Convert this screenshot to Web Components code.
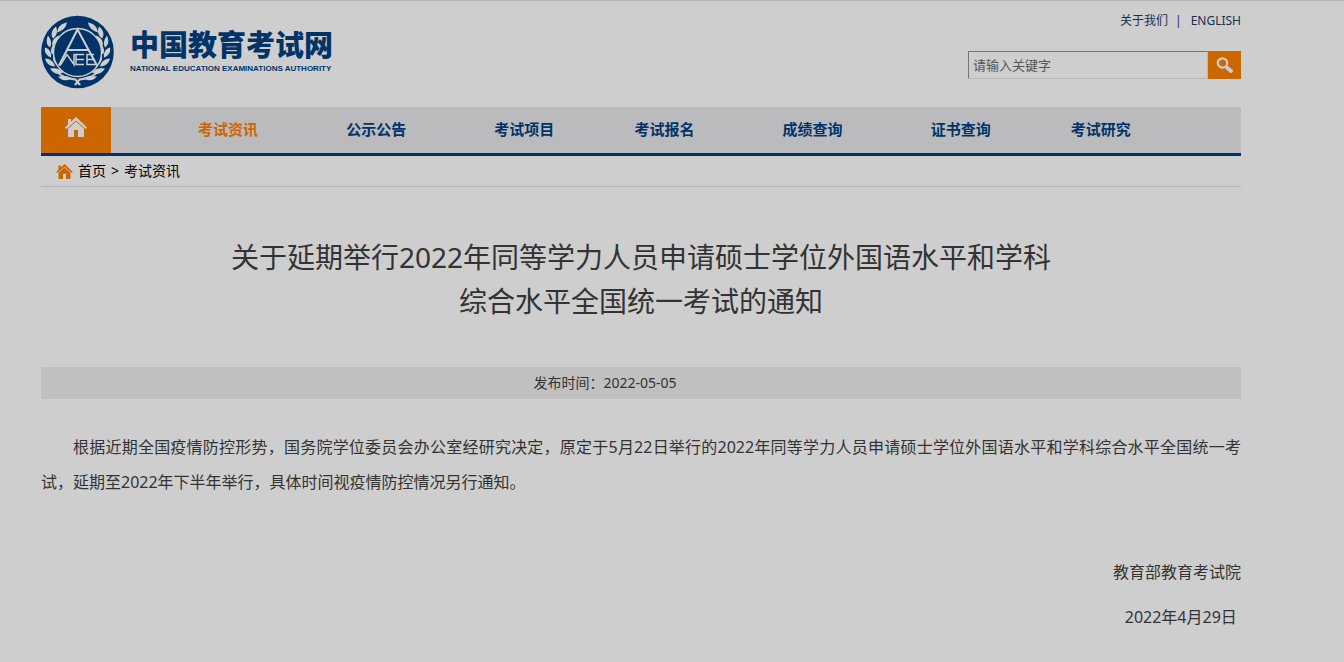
<!DOCTYPE html>
<html lang="zh-CN">
<head>
<meta charset="utf-8">
<title>中国教育考试网</title>
<style>
  html {
    --page: #cecece;
    --blue: #003468;
    --orange: #cc6600;
    --text: #333;
  }
  body {
    margin: 0;
    background: var(--page);
    color: var(--text);
    font-family: "Noto Sans", "Noto Sans CJK SC", sans-serif;
    font-size: 14px;
  }
</style>
</head>
<body>
<exam-page>
  <site-header slot="header"></site-header>
  <site-nav slot="header" current="考试资讯"
    links='["考试资讯","公示公告","考试项目","考试报名","成绩查询","证书查询","考试研究"]'></site-nav>
  <bread-crumb slot="header" page="考试资讯"></bread-crumb>
  <notice-article date="2022-05-05">
    <span slot="title">关于延期举行2022年同等学力人员申请硕士学位外国语水平和学科<br>综合水平全国统一考试的通知</span>
    <span slot="content">根据近期全国疫情防控形势，国务院学位委员会办公室经研究决定，原定于5月22日举行的2022年同等学力人员申请硕士学位外国语水平和学科综合水平全国统一考试，延期至2022年下半年举行，具体时间视疫情防控情况另行通知。</span>
    <span slot="sign">教育部教育考试院</span>
    <span slot="sign-date">2022年4月29日&nbsp;</span>
  </notice-article>
</exam-page>

<script>
class ExamPage extends HTMLElement {
  constructor() {
    super();
    this.attachShadow({ mode: "open" });
    this.shadowRoot.innerHTML = `
      <style>
        :host {
          display: block;
          border-top: 1px solid #b8b8b8;
          padding: 0 103px 0 41px;
        }
        .container {
          max-width: 1200px;
        }
      </style>
      <div class="container">
        <slot name="header"></slot>
        <main><slot></slot></main>
      </div>
    `;
  }
}

class SiteLogo extends HTMLElement {
  constructor() {
    super();
    this.attachShadow({ mode: "open" });
    this.shadowRoot.innerHTML = `
      <style>
        :host {
          display: block;
          color: var(--blue);
        }
        a {
          display: flex;
          align-items: center;
          gap: 16px;
          color: inherit;
          text-decoration: none;
        }
        svg {
          display: block;
          width: 73px;
          height: 74px;
        }
        .name {
          display: flex;
          flex-direction: column;
          white-space: nowrap;
        }
        .cn {
          font-size: 29px;
          font-weight: 900;
          line-height: 34px;
        }
        .en {
          font: bold 8px/14px "Liberation Sans", Arial, sans-serif;
        }
      </style>
      <a href="#">
        <svg viewBox="0 0 73 73" aria-hidden="true">
          <defs>
            <g id="branch" fill="#cecece">
              <path d="M34 65C25 64 17 60 12 54L13 53C19 59 26 62 35 63L40 69L38 70Z"/>
              <path d="M31 63C25 66 20 65 17 61C22 60 27 60 31 63Z"/>
              <path d="M22 57C17 60 12 58 9 53C15 52 19 53 22 57Z"/>
              <path d="M23 57C19 54 17 50 18 46C22 50 24 53 23 57Z"/>
              <path d="M14 51C8 51 5 47 4 43C9 43 13 46 14 51Z"/>
              <path d="M15 49C12 46 11 42 13 38C16 42 17 45 15 49Z"/>
              <path d="M10 42C5 40 3 36 4 32C8 33 11 37 10 42Z"/>
              <path d="M11 39C9 36 10 32 13 28C15 33 15 36 11 39Z"/>
              <path d="M9 32C5 29 5 25 7 20C10 24 11 28 9 32Z"/>
              <path d="M11 30C11 25 13 22 18 20C18 25 16 28 11 30Z"/>
              <path d="M12 23C9 19 11 14 15 11C17 16 16 20 12 23Z"/>
              <path d="M16 17C17 11 20 8 26 7C25 12 22 15 16 17Z"/>
            </g>
          </defs>
          <circle cx="36.5" cy="36.5" r="36.3" fill="#003468"/>
          <use href="#branch"/>
          <use href="#branch" transform="translate(73 0) scale(-1 1)"/>
          <circle cx="36.5" cy="37" r="24" fill="#003468" stroke="#cecece" stroke-width="1.4"/>
          <g fill="none" stroke="#cecece" stroke-width="2">
            <path d="M18 50L36.500 14L56 50"/>
            <path d="M26 34.500H47"/>
            <path d="M19 50L26 39L33 49V39H43M43 49H35V39M35 44H43M56 49H46V39H53M46 44H54" stroke-width="1.500"/>
          </g>
        </svg>
        <span class="name">
          <span class="cn">中国教育考试网</span>
          <span class="en">NATIONAL EDUCATION EXAMINATIONS AUTHORITY</span>
        </span>
      </a>
    `;
  }
}

class SearchBox extends HTMLElement {
  constructor() {
    super();
    this.attachShadow({ mode: "open" });
    this.shadowRoot.innerHTML = `
      <style>
        :host {
          display: block;
        }
        form {
          display: flex;
          height: 28px;
        }
        input {
          box-sizing: border-box;
          width: 240px;
          margin: 0;
          padding: 0 4px;
          border: 1px solid #b8b8b8;
          border-top-color: #767676;
          border-left-color: #767676;
          border-radius: 0;
          background: transparent;
          color: #555;
          font: inherit;
          font-size: 13px;
        }
        input::placeholder {
          color: #555;
          opacity: 1;
        }
        button {
          display: flex;
          align-items: center;
          justify-content: center;
          width: 33px;
          padding: 0;
          border: 0;
          background: var(--orange);
        }
      </style>
      <form>
        <input type="text" placeholder="请输入关键字" aria-label="请输入关键字">
        <button type="button" aria-label="搜索">
          <svg width="18" height="18" viewBox="0 0 18 18" fill="none" stroke="#cecece">
            <circle cx="6.500" cy="7" r="4.700" stroke-width="2.200"/>
            <path d="M10 10.500L11.500 12" stroke-width="2.500"/>
            <path d="M11.500 12L15 15" stroke-width="4" stroke-linecap="round"/>
          </svg>
        </button>
      </form>
    `;
  }
}

class SiteHeader extends HTMLElement {
  constructor() {
    super();
    this.attachShadow({ mode: "open" });
    this.shadowRoot.innerHTML = `
      <style>
        :host {
          display: block;
        }
        header {
          display: flex;
          justify-content: space-between;
          align-items: flex-start;
          height: 106px;
        }
        site-logo {
          padding-top: 14px;
        }
        .right {
          display: flex;
          flex-direction: column;
          align-items: flex-end;
          gap: 20px;
          padding-top: 10px;
        }
        .links {
          display: flex;
          gap: 7px;
          font-size: 12px;
          line-height: 20px;
          color: #1c2c4c;
        }
        .links a {
          color: inherit;
          text-decoration: none;
        }
        .links a:last-child {
          margin-left: 2px;
        }
      </style>
      <header>
        <site-logo></site-logo>
        <div class="right">
          <div class="links"><a href="#">关于我们</a><span>|</span><a href="#">ENGLISH</a></div>
          <search-box></search-box>
        </div>
      </header>
    `;
  }
}

class HomeIcon extends HTMLElement {
  constructor() {
    super();
    this.attachShadow({ mode: "open" });
    this.shadowRoot.innerHTML = `
      <style>
        :host {
          display: block;
          width: 22px;
          height: 20px;
        }
        svg {
          display: block;
          width: 100%;
          height: 100%;
        }
      </style>
      <svg viewBox="0 0 22 20" fill="currentColor" aria-hidden="true">
        <path d="M11 0L22 10.500L20.500 12L11 3.500L1.500 12L0 10.500L3 7.500V2H6V4.700Z"/>
        <path d="M11 4.500L19 11.700V19Q19 20 18 20H13V13H9V20H4Q3 20 3 19V11.700Z"/>
      </svg>
    `;
  }
}

class SiteNav extends HTMLElement {
  constructor() {
    super();
    this.attachShadow({ mode: "open" });
    this.shadowRoot.innerHTML = `
      <style>
        :host {
          display: block;
        }
        nav {
          display: flex;
          height: 46px;
          border-bottom: 3px solid var(--blue);
          background: #bbbbbd;
        }
        a {
          color: var(--blue);
          text-decoration: none;
        }
        .home {
          display: flex;
          justify-content: center;
          flex: none;
          box-sizing: border-box;
          width: 70px;
          padding-top: 10px;
          background: var(--orange);
          color: #cecece;
        }
        ul {
          flex: 1;
          display: grid;
          grid-template-columns: 148fr 148fr 140fr 148fr 148fr 140fr 140fr;
          margin: 0;
          padding: 0 30px 0 87px;
          list-style: none;
          font-size: 15px;
          font-weight: bold;
          line-height: 44px;
          white-space: nowrap;
        }
        .current {
          color: var(--orange);
        }
      </style>
      <nav>
        <a class="home" href="#" aria-label="首页"><home-icon></home-icon></a>
        <ul></ul>
      </nav>
    `;
  }

  connectedCallback() {
    const ulEl = this.shadowRoot.querySelector("ul");
    const links = JSON.parse(this.getAttribute("links"));
    for (const link of links) {
      const liEl = document.createElement("li");
      const aEl = document.createElement("a");
      aEl.href = "#";
      aEl.textContent = link;
      if (link === this.getAttribute("current")) {
        aEl.classList.add("current");
      }
      liEl.appendChild(aEl);
      ulEl.appendChild(liEl);
    }
  }
}

class BreadCrumb extends HTMLElement {
  constructor() {
    super();
    this.attachShadow({ mode: "open" });
    this.shadowRoot.innerHTML = `
      <style>
        :host {
          display: flex;
          align-items: center;
          gap: 5px;
          box-sizing: border-box;
          height: 31px;
          padding: 0 0 2px 15px;
          border-bottom: 1px solid #b3b3b3;
          color: #000;
        }
        a {
          color: inherit;
          text-decoration: none;
        }
        home-icon {
          width: 17px;
          height: 15px;
          padding-top: 3px;
          color: var(--orange);
        }
        .sep {
          font-size: 14px;
        }
      </style>
      <home-icon></home-icon>
      <a href="#">首页</a>
      <span class="sep">&gt;</span>
      <a class="page" href="#"></a>
    `;
  }

  connectedCallback() {
    this.shadowRoot.querySelector(".page").textContent = this.getAttribute("page");
  }
}

class NoticeArticle extends HTMLElement {
  constructor() {
    super();
    this.attachShadow({ mode: "open" });
    this.shadowRoot.innerHTML = `
      <style>
        :host {
          display: block;
        }
        h1 {
          margin: 48px 0 44px;
          font-size: 28px;
          font-weight: normal;
          line-height: 44px;
          text-align: center;
        }
        .info {
          padding-right: 72px;
          background: #c0c0c0;
          line-height: 32px;
          text-align: center;
        }
        .content {
          margin: 31px 0 55px;
          font-size: 16px;
          line-height: 35px;
          text-align: justify;
          text-indent: 2em;
        }
        .sign {
          margin: 0 0 10px;
          font-size: 16px;
          line-height: 35px;
          text-align: right;
        }
      </style>
      <article>
        <h1><slot name="title"></slot></h1>
        <div class="info">发布时间：<time></time></div>
        <p class="content"><slot name="content"></slot></p>
        <p class="sign"><slot name="sign"></slot></p>
        <p class="sign"><slot name="sign-date"></slot></p>
      </article>
    `;
  }

  connectedCallback() {
    this.shadowRoot.querySelector("time").textContent = this.getAttribute("date");
  }
}

customElements.define("home-icon", HomeIcon);
customElements.define("site-logo", SiteLogo);
customElements.define("search-box", SearchBox);
customElements.define("site-header", SiteHeader);
customElements.define("site-nav", SiteNav);
customElements.define("bread-crumb", BreadCrumb);
customElements.define("notice-article", NoticeArticle);
customElements.define("exam-page", ExamPage);
</script>
</body>
</html>
